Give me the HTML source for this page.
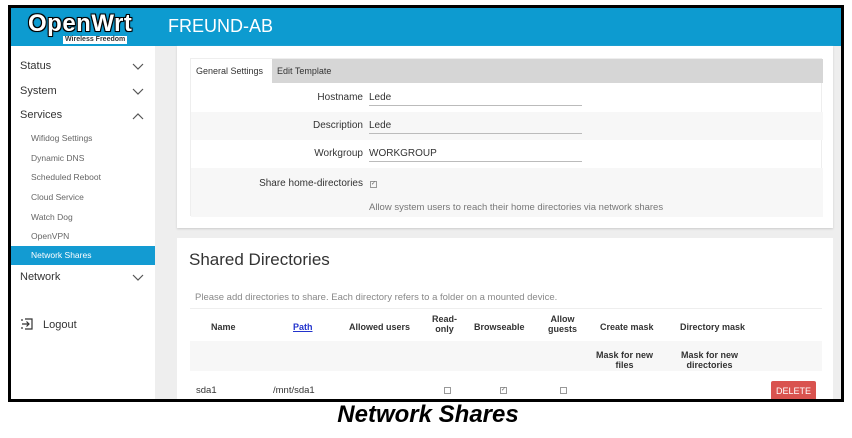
<!DOCTYPE html>
<html><head><meta charset="utf-8"><style>
*{margin:0;padding:0;box-sizing:border-box}
body{width:852px;height:438px;background:#fff;font-family:"Liberation Sans",sans-serif;position:relative;overflow:hidden;color:#333}
.a{position:absolute}
#frame{left:8px;top:5px;width:836px;height:397px;border:3px solid #000;background:#eee;overflow:hidden}
#hdr{left:0;top:0;width:830px;height:38px;background:#0d9bd0}
.logo{left:17px;top:2px;color:#fff;font-weight:bold;font-size:24px;letter-spacing:0.5px;text-shadow:0 0 2px #000,1px 1px 0 #000,-1px -1px 0 #000,1px -1px 0 #000,-1px 1px 0 #000}
.logo2{left:52px;top:28px;color:#333;font-size:7px;font-weight:bold;background:#fff;padding:0 2px;line-height:8px}
.host{left:157px;top:8px;color:#fff;font-size:18px}
#side{left:0;top:38px;width:144px;height:360px;background:#fff}
.m{position:absolute;left:9px;font-size:11px;color:#333}
.s{position:absolute;left:20px;font-size:8.5px;color:#666}
.chev{position:absolute;left:121px;width:12px;height:8px}
.p{background:#fff}
.lbl{position:absolute;font-size:10px;color:#333;text-align:right;width:180px}
.val{position:absolute;font-size:10px;color:#333;border-bottom:1px solid #bbb;width:213px;height:14px;left:358px}
.c{position:absolute;font-size:9px;font-weight:bold;text-align:center;line-height:10px}
.cb{position:absolute;width:7px;height:7px;border:1px solid #999;font-size:6px;line-height:5px;text-align:center;color:#666}
</style></head><body>
<div id="frame" class="a">
 <div id="hdr" class="a">
  <div class="a logo">OpenWrt</div>
  <div class="a logo2">Wireless Freedom</div>
  <div class="a host">FREUND-AB</div>
 </div>
 <div id="side" class="a">
  <div class="m" style="top:14px">Status</div>
  <svg class="chev" style="top:17px" viewBox="0 0 12 8"><path d="M1 1 L6 6 L11 1" fill="none" stroke="#555" stroke-width="1.2"/></svg>
  <div class="m" style="top:39px">System</div>
  <svg class="chev" style="top:42px" viewBox="0 0 12 8"><path d="M1 1 L6 6 L11 1" fill="none" stroke="#555" stroke-width="1.2"/></svg>
  <div class="m" style="top:63px">Services</div>
  <svg class="chev" style="top:66px" viewBox="0 0 12 8"><path d="M1 7 L6 2 L11 7" fill="none" stroke="#555" stroke-width="1.2"/></svg>
  <div class="s" style="top:87px">Wifidog Settings</div>
  <div class="s" style="top:107px">Dynamic DNS</div>
  <div class="s" style="top:126px">Scheduled Reboot</div>
  <div class="s" style="top:146px">Cloud Service</div>
  <div class="s" style="top:166px">Watch Dog</div>
  <div class="s" style="top:185px">OpenVPN</div>
  <div class="a" style="left:0;top:200px;width:144px;height:19px;background:#139bd2"></div>
  <div class="s" style="top:204px;color:#fff">Network Shares</div>
  <div class="m" style="top:225px">Network</div>
  <svg class="chev" style="top:228px" viewBox="0 0 12 8"><path d="M1 1 L6 6 L11 1" fill="none" stroke="#555" stroke-width="1.2"/></svg>
  <svg class="a" style="left:10px;top:272px" width="12" height="12" viewBox="0 0 12 12"><path d="M4 1 H11 V11 H4 M1 6 H8 M5.5 3.5 L8 6 L5.5 8.5 M1 1 V3 M1 9 V11" fill="none" stroke="#333" stroke-width="1.2"/></svg>
  <div class="m" style="left:32px;top:273px">Logout</div>
 </div>
 <div class="a p" style="left:166px;top:38px;width:656px;height:182px;box-shadow:0 1px 2px #ccc">
  <div class="a" style="left:13px;top:12px;width:632px;height:158px;border:1px solid #eee;background:#fff">
   <div class="a" style="left:0;top:0;width:632px;height:24px;background:#d6d6d6"></div>
   <div class="a" style="left:0;top:0;width:81px;height:24px;background:#fff;font-size:9px;padding:7px 0 0 5px">General Settings</div>
   <div class="a" style="left:86px;top:7px;font-size:9px">Edit Template</div>
   <div class="a" style="left:0;top:53px;width:632px;height:28px;background:#f7f7f7"></div>
   <div class="a" style="left:0;top:109px;width:632px;height:49px;background:#f7f7f7"></div>
  </div>
 </div>
 <div class="lbl" style="left:172px;top:84px">Hostname</div>
 <div class="val" style="top:84px">Lede</div>
 <div class="lbl" style="left:172px;top:112px">Description</div>
 <div class="val" style="top:112px">Lede</div>
 <div class="lbl" style="left:172px;top:140px">Workgroup</div>
 <div class="val" style="top:140px">WORKGROUP</div>
 <div class="lbl" style="left:172px;top:170px">Share home-directories</div>
 <div class="cb" style="left:359px;top:173px">✓</div>
 <div class="a" style="left:358px;top:194px;font-size:9.5px;color:#777">Allow system users to reach their home directories via network shares</div>
 <div class="a p" style="left:166px;top:230px;width:656px;height:170px">
  <div class="a" style="left:12px;top:12px;font-size:17px;color:#333">Shared Directories</div>
  <div class="a" style="left:18px;top:54px;font-size:9.5px;color:#888">Please add directories to share. Each directory refers to a folder on a mounted device.</div>
  <div class="a" style="left:13px;top:70px;width:632px;height:100px;border-top:1px solid #eee">
   <div class="a" style="left:0;top:32px;width:632px;height:30px;background:#f7f7f7"></div>
  </div>
 </div>
 <div class="c" style="left:200px;top:314px">Name</div>
 <div class="c" style="left:282px;top:314px;color:#2233cc;text-decoration:underline">Path</div>
 <div class="c" style="left:338px;top:314px">Allowed users</div>
 <div class="c" style="left:421px;top:306px">Read-<br>only</div>
 <div class="c" style="left:463px;top:314px">Browseable</div>
 <div class="c" style="left:537px;top:306px">Allow<br>guests</div>
 <div class="c" style="left:589px;top:314px">Create mask</div>
 <div class="c" style="left:669px;top:314px">Directory mask</div>
 <div class="c" style="left:585px;top:342px">Mask for new<br>files</div>
 <div class="c" style="left:670px;top:342px">Mask for new<br>directories</div>
 <div class="a" style="left:185px;top:377px;font-size:9.5px">sda1</div>
 <div class="a" style="left:262px;top:377px;font-size:9.5px">/mnt/sda1</div>
 <div class="cb" style="left:433px;top:379px"></div>
 <div class="cb" style="left:489px;top:379px">✓</div>
 <div class="cb" style="left:549px;top:379px"></div>
 <div class="a" style="left:760px;top:373px;width:45px;height:20px;background:#d9534f;color:#fff;font-size:9px;text-align:center;line-height:20px;border-radius:2px">DELETE</div>
</div>
<div class="a" style="left:0;top:401px;width:852px;text-align:center;font-size:24px;font-weight:bold;font-style:italic;color:#000;padding-left:4px">Network Shares</div>
</body></html>
